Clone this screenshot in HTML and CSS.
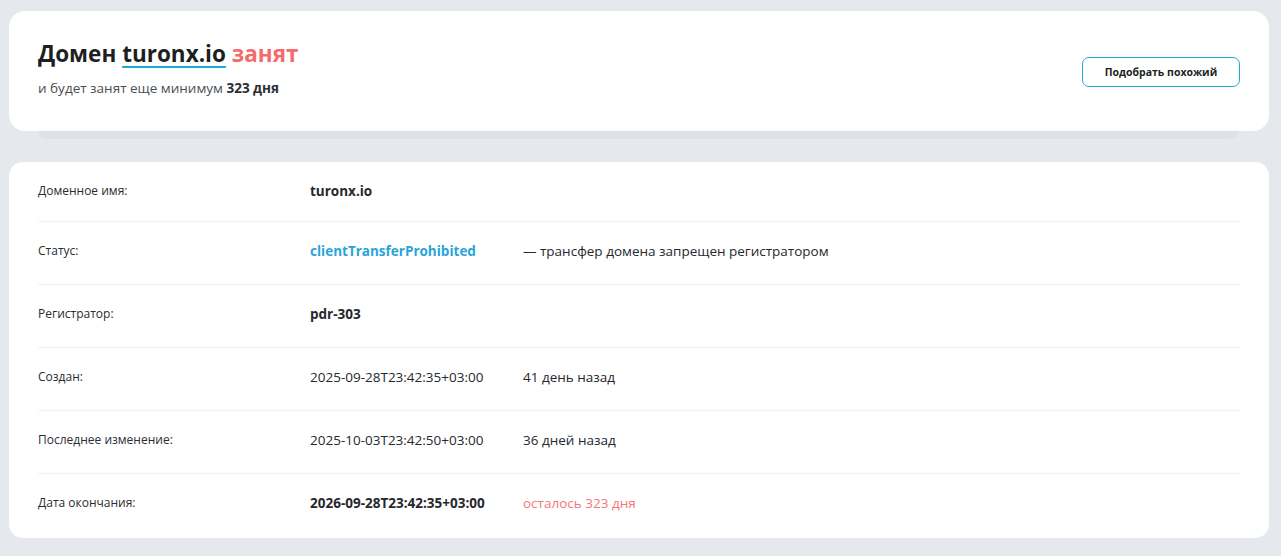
FILE: index.html
```html
<!DOCTYPE html>
<html lang="ru">
<head>
    <meta charset="UTF-8">
    <meta name="viewport" content="width=device-width, initial-scale=1.0">
    <title>Домен turonx.io занят</title>
    <link rel="stylesheet" href="styles.css">
</head>
<body>
    <div class="page">
        <div class="summary">
            <div class="summary-card">
                <div class="summary-text">
                    <h1 class="title">Домен <span class="domain">turonx.io</span> <span class="busy">занят</span></h1>
                    <p class="subtitle">и будет занят еще минимум <b>323 дня</b></p>
                </div>
                <button class="similar-btn">Подобрать похожий</button>
            </div>
            <div class="summary-shadow"></div>
        </div>

        <div class="info-card">
            <div class="info-row">
                <div class="info-label">Доменное имя:</div>
                <div class="info-value bold">turonx.io</div>
            </div>
            <div class="info-row">
                <div class="info-label">Статус:</div>
                <div class="info-value bold status">clientTransferProhibited</div>
                <div class="info-note">— трансфер домена запрещен регистратором</div>
            </div>
            <div class="info-row">
                <div class="info-label">Регистратор:</div>
                <div class="info-value bold">pdr-303</div>
            </div>
            <div class="info-row">
                <div class="info-label">Создан:</div>
                <div class="info-value">2025-09-28T23:42:35+03:00</div>
                <div class="info-note">41 день назад</div>
            </div>
            <div class="info-row">
                <div class="info-label">Последнее изменение:</div>
                <div class="info-value">2025-10-03T23:42:50+03:00</div>
                <div class="info-note">36 дней назад</div>
            </div>
            <div class="info-row">
                <div class="info-label">Дата окончания:</div>
                <div class="info-value bold">2026-09-28T23:42:35+03:00</div>
                <div class="info-note left">осталось 323 дня</div>
            </div>
        </div>
    </div>
</body>
</html>
```

FILE: styles.css
```css
body {
    margin: 0;
    background-color: #e5e9ed;
    font-family: 'Open Sans', 'Noto Sans', sans-serif;
    color: #222;
}
.page {
    padding: 11px 12px 18px 9px;
}
.summary-card {
    display: flex;
    align-items: flex-start;
    justify-content: space-between;
    height: 120px;
    box-sizing: border-box;
    padding: 28px 29px 0 29px;
    background-color: #fff;
    border-radius: 16px;
}
.summary-shadow {
    height: 8px;
    margin: 0 30px 0 29px;
    background-color: #dde2e7;
    border-radius: 0 0 8px 8px;
}
.title {
    margin: 0;
    font-size: 22.5px;
    line-height: 30px;
    font-weight: 700;
    color: #1e1f22;
}
.domain {
    text-decoration: underline;
    text-decoration-color: #1ba9d8;
    text-decoration-thickness: 1.5px;
    text-underline-offset: 4px;
}
.busy {
    color: #f56b6b;
}
.subtitle {
    margin: 10px 0 0;
    font-size: 13.5px;
    line-height: 18px;
    color: #4a4d52;
}
.subtitle b {
    color: #2b2e33;
}
.similar-btn {
    width: 158px;
    height: 30px;
    margin-top: 18px;
    background-color: #fff;
    border: 1px solid #29a6d6;
    border-radius: 7px;
    font-family: inherit;
    font-size: 10.5px;
    font-weight: 700;
    color: #1e1f22;
    cursor: pointer;
}
.info-card {
    margin-top: 23px;
    padding: 0 29px 0 29px;
    background-color: #fff;
    border-radius: 14px;
}
.info-row {
    display: flex;
    align-items: center;
    height: 62px;
    border-bottom: 1px solid #f0f1f3;
}
.info-row > div {
    margin-bottom: 4px;
}
.info-row:first-child {
    height: 59px;
}
.info-row:first-child > div {
    margin-bottom: 1px;
}
.info-row:last-child {
    height: 64px;
    border-bottom: none;
}
.info-row:last-child > div {
    margin-bottom: 6px;
}
.info-row > .info-label {
    width: 272px;
    flex-shrink: 0;
    font-size: 12px;
    color: #2a2c30;
    margin-top: -2px;
}
.info-value {
    width: 213px;
    flex-shrink: 0;
    font-size: 13.5px;
    color: #26282c;
}
.info-value.bold {
    font-weight: 700;
}
.status {
    color: #2aa3d9 !important;
}
.info-note {
    font-size: 13.5px;
    color: #26282c;
}
.info-note.left {
    color: #f4777a;
}
```
